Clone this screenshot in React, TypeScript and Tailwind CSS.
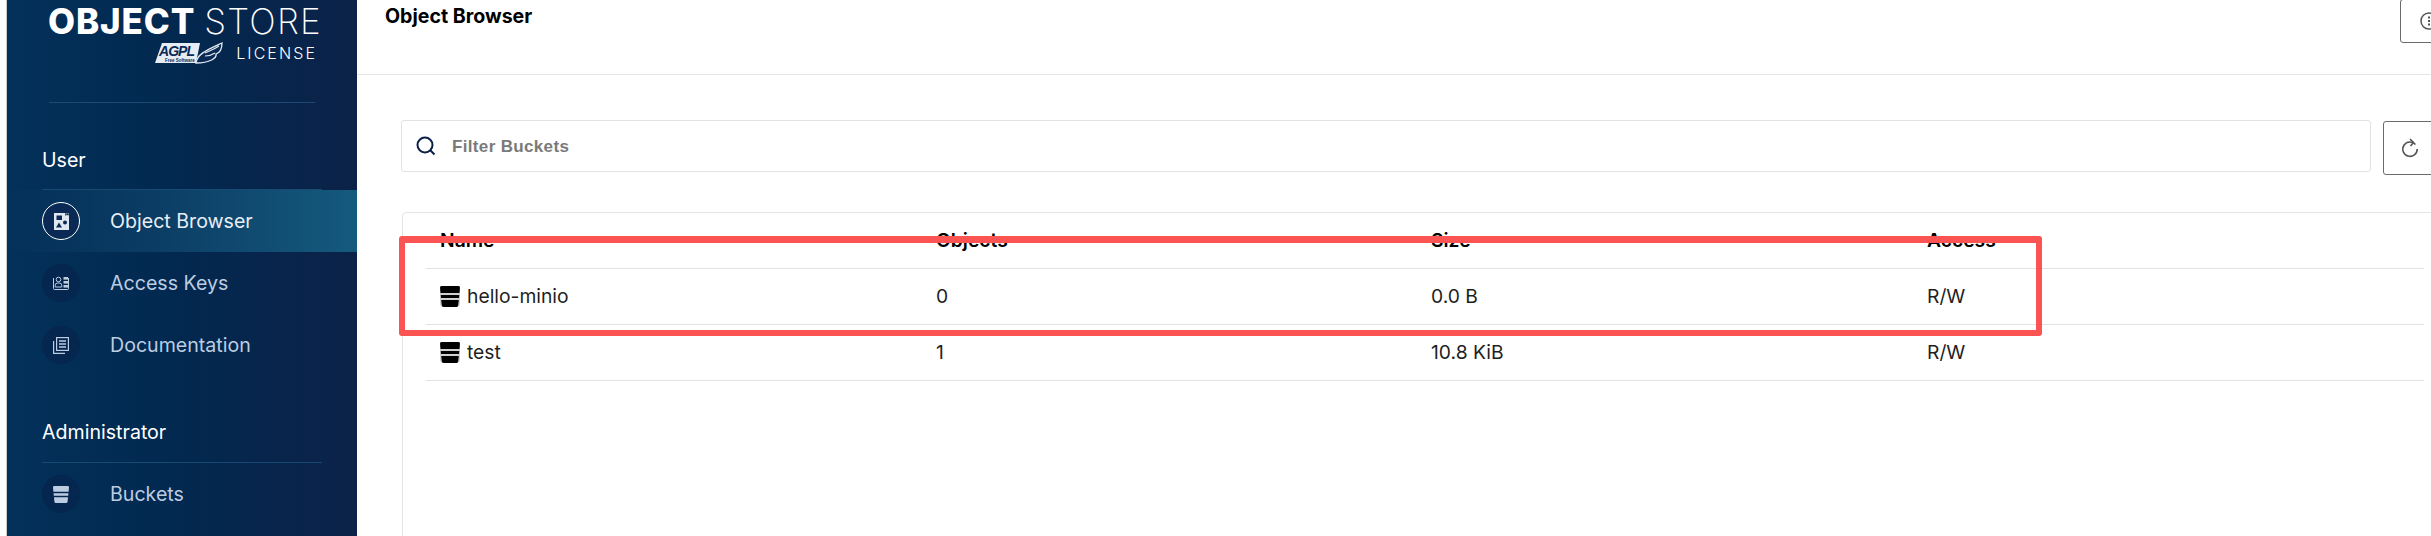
import React from 'react';

const BucketIcon = ({ className }: { className?: string }) => (
  <svg viewBox="0 0 20 21" className={className} fill="currentColor">
    <path d="M1.500 0h17A1.500 1.500 0 0 1 20 1.500l-.5 5.500H.5L0 1.500A1.500 1.500 0 0 1 1.500 0z" />
    <path d="M.7 9h18.600l-.3 3H1z" />
    <path d="M1.200 14h17.600l-.6 5.500A1.700 1.700 0 0 1 16.500 21h-13a1.700 1.700 0 0 1-1.700-1.500z" />
  </svg>
);

const ObjectBrowserIcon = () => (
  <svg viewBox="0 0 15 17" className="w-[15px] h-[17px]">
    <path d="M0 0h11v2.500h4V17H0z" fill="#dfe7f0" />
    <rect x="2.500" y="2.500" width="5.500" height="4.500" fill="#0a2a55" />
    <rect x="12" y="0" width="3" height="2.500" fill="none" stroke="#dfe7f0" strokeWidth="0.600" />
    <circle cx="11" cy="9.500" r="2" fill="#0a2a55" />
    <path d="M5 9.500l3 5H2z" fill="#0a2a55" />
  </svg>
);

const AccessKeysIcon = () => (
  <svg viewBox="0 0 16 14" className="w-[16px] h-[14px]" fill="none" stroke="#bccde2" strokeWidth="1">
    <path d="M.5 2v10.500a1 1 0 0 0 1 1h13a1 1 0 0 0 1-1V2" />
    <circle cx="5.500" cy="3.500" r="2.300" />
    <path d="M2.200 11v-1.500A2.500 2.500 0 0 1 4.700 7h1.600a2.500 2.500 0 0 1 2.500 2.500V11z" />
    <rect x="10.500" y="1" width="4.500" height="2.600" fill="#bccde2" stroke="none" />
    <rect x="10.500" y="5" width="4.500" height="2.600" fill="#bccde2" stroke="none" />
    <rect x="10.500" y="9" width="4.500" height="2.600" fill="#bccde2" stroke="none" />
  </svg>
);

const DocsIcon = () => (
  <svg viewBox="0 0 16 17" className="w-[16px] h-[17px]" fill="none" stroke="#bccde2" strokeWidth="1.200">
    <rect x="3.600" y="0.600" width="11.800" height="12.800" />
    <path d="M.6 4v12.400h11.400" />
    <path d="M6 4h7M6 7h7M6 10h7" strokeWidth="1.400" />
  </svg>
);

const SideItem = ({ label, icon, active }: { label: string; icon: React.ReactNode; active?: boolean }) => (
  <div
    className={`flex items-center h-[62px] pl-[35px] ${
      active ? 'bg-gradient-to-r from-transparent via-[#0d4168] to-[#155a7e] text-[#e8eef5]' : 'text-[#bccde2]'
    }`}
  >
    <span
      className={`flex items-center justify-center w-[38px] h-[38px] rounded-full shrink-0 ${
        active ? 'border border-white bg-[#0a2a55]' : 'bg-[#05264f]'
      }`}
    >
      {icon}
    </span>
    <span className="ml-[30px] mt-[2px] text-[19.6px] leading-none">{label}</span>
  </div>
);

const rows = [
  { name: 'hello-minio', objects: '0', size: '0.0 B', access: 'R/W' },
  { name: 'test', objects: '1', size: '10.8 KiB', access: 'R/W' },
];

export default function App() {
  return (
    <div className="relative flex w-[2431px] h-[536px] overflow-hidden bg-white font-['Inter',sans-serif]">
      {/* left edge of the window */}
      <div className="w-[7px] shrink-0 border-r border-[#c9c9c9]" />

      {/* Sidebar */}
      <aside className="w-[350px] shrink-0 bg-gradient-to-r from-[#03315a] via-[#02284f] to-[#0c2248] text-white">
        <div className="pl-[42px] pt-[3px]">
          <div className="flex items-baseline -ml-px text-[35px] leading-[36px]">
            <span className="font-extrabold tracking-[0.025em]">OBJECT</span>
            <span className="ml-[9px] font-extralight tracking-[0.035em]">STORE</span>
          </div>
          <div className="flex items-center justify-end w-[266px] mt-[3px]">
            <svg viewBox="0 0 68 22" className="w-[68px] h-[22px]">
              <path d="M7 1h38l-4 20H0z" fill="#e6ecf3" />
              <text x="4" y="14" fontFamily="Liberation Sans, sans-serif" fontSize="14" fontStyle="italic" fontWeight="700" fill="#0a2a55" textLength="36">
                AGPL
              </text>
              <text x="10" y="20" fontFamily="Liberation Sans, sans-serif" fontSize="4.500" fontWeight="700" fill="#0a2a55">
                Free Software
              </text>
              <path d="M41 21C42 12 52 8 67 1c0 7-3 10-6 11 1 4-6 9-20 9z" fill="#0a2a55" stroke="#e6ecf3" strokeWidth="1.300" />
              <path d="M50 11c4-2 8-3 14-7M50 14c3 0 7-1 10-3" fill="none" stroke="#e6ecf3" strokeWidth="1.100" />
            </svg>
            <span className="ml-[13px] text-[16px] leading-none tracking-[0.13em] font-light mr-[-2px]">LICENSE</span>
          </div>
          <div className="w-[266px] mt-[38px] h-px bg-[#1c4a72]" />
        </div>

        <div className="mt-[45px] pl-[35px] text-[19.6px] leading-[24px]">User</div>
        <div className="ml-[35px] mr-[35px] mt-[17px] h-px bg-[#174a72]" />
        <SideItem label="Object Browser" icon={<ObjectBrowserIcon />} active />
        <SideItem label="Access Keys" icon={<AccessKeysIcon />} />
        <SideItem label="Documentation" icon={<DocsIcon />} />

        <div className="mt-[44px] pl-[35px] text-[19.6px] leading-[24px]">Administrator</div>
        <div className="ml-[35px] mr-[35px] mt-[18px] h-px bg-[#174a72]" />
        <SideItem label="Buckets" icon={<BucketIcon className="w-[16px] h-[17px] text-[#bccde2]" />} />
      </aside>

      {/* Main */}
      <main className="flex-1 min-w-0">
        <header className="flex items-start justify-between h-[75px] border-b border-[#e4e4e4] pl-[28px]">
          <h1 className="mt-[3px] text-[19.6px] leading-[26px] font-bold text-black">Object Browser</h1>
          <button className="flex items-center w-[60px] h-[44px] -mt-px shrink-0 -mr-[29px] pl-[19px] border border-[#6b6b6b] rounded-[3px] text-[#555]">
            <svg viewBox="0 0 18 18" className="w-[18px] h-[18px] shrink-0" fill="none" stroke="currentColor" strokeWidth="1.500">
              <circle cx="9" cy="9" r="8" />
              <path d="M8 5.500h2M8 9h2M8 12.500h2" strokeWidth="2" />
            </svg>
          </button>
        </header>

        <div className="flex items-start gap-[12px] mt-[45px] ml-[44px]">
          <div className="flex items-center w-[1970px] h-[52px] shrink-0 border border-[#e2e2e2] rounded-[3px] pl-[14px]">
            <svg viewBox="0 0 20 20" className="w-[20px] h-[20px]" fill="none" stroke="#0b2148" strokeWidth="2">
              <circle cx="9" cy="9" r="7.500" />
              <path d="M14 14l4.500 4.500" />
            </svg>
            <span className="ml-[16px] mt-[1px] text-[17px] font-semibold text-[#7a7a7a] font-['Liberation_Sans',sans-serif] tracking-[0.02em]">Filter Buckets</span>
          </div>
          <button className="flex items-center w-[60px] h-[54px] mt-px shrink-0 pl-[17px] border border-[#6b6b6b] rounded-[3px] text-[#555]">
            <svg viewBox="0 0 18 20" className="w-[18px] h-[20px] shrink-0" fill="none" stroke="currentColor" strokeWidth="1.600">
              <path d="M14.500 6.500A7.200 7.200 0 1 0 16.200 11" />
              <path d="M9 1l3.500 3.500L9.500 8" />
            </svg>
          </button>
        </div>

        <section className="ml-[45px] mt-[37px] w-[2100px] h-[400px] border border-[#e4e4e4] rounded-[4px] pl-[23px]">
          <div className="w-[1998px]">
            <div className="grid grid-cols-[496px_495px_496px_1fr] items-center h-[56px] border-b border-[#e2e2e2] pl-[14px] text-[19.3px] font-semibold text-black">
              <span>Name</span>
              <span>Objects</span>
              <span>Size</span>
              <span>Access</span>
            </div>
            {rows.map((row) => (
              <div
                key={row.name}
                className="grid grid-cols-[496px_495px_496px_1fr] items-center h-[56px] border-b border-[#e2e2e2] pl-[14px] text-[19.3px] text-[#1f1f1f]"
              >
                <span className="flex items-center">
                  <span className="flex bg-[#cfcfcf] rounded-b-[4px]">
                    <BucketIcon className="w-[20px] h-[21px] text-black" />
                  </span>
                  <span className="ml-[7px]">{row.name}</span>
                </span>
                <span>{row.objects}</span>
                <span>{row.size}</span>
                <span>{row.access}</span>
              </div>
            ))}
          </div>
        </section>
      </main>

      {/* red annotation drawn over the screenshot */}
      <div className="absolute left-[399px] top-[236px] w-[1643px] h-[100px] border-[6px] border-t-[7px] border-[#fc5353] rounded-[3px]" />
    </div>
  );
}
